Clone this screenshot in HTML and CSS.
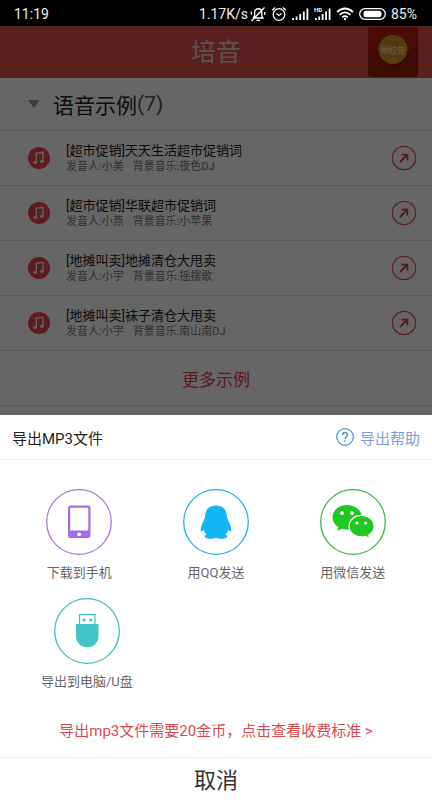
FILE: index.html
```html
<!DOCTYPE html>
<html lang="zh-CN">
<head>
<meta charset="utf-8">
<meta name="viewport" content="width=device-width, initial-scale=1">
<title>培音</title>
<link rel="stylesheet" href="styles.css">
</head>
<body>
<svg class="defs" aria-hidden="true">
  <symbol id="music" viewBox="0 0 22 22">
    <circle cx="11" cy="11" r="11" fill="#f04450"/>
    <path d="M8.300 15.500V6.300L14.900 5.300V14.500" fill="none" stroke="#eee" stroke-width="1.400"/>
    <ellipse cx="7.200" cy="15.500" rx="1.900" ry="1.400" fill="#eee"/>
    <ellipse cx="13.800" cy="14.500" rx="1.900" ry="1.400" fill="#eee"/>
  </symbol>
  <symbol id="arrow" viewBox="0 0 26 26">
    <circle cx="13" cy="13" r="11.600" fill="none" stroke="#d65464" stroke-width="1.300"/>
    <path d="M9 17L16 10M10.500 9.700H16.400V15.500" fill="none" stroke="#d8404f" stroke-width="1.800"/>
  </symbol>
</svg>

<div class="status">
  <span class="time">11:19</span>
  <div class="status-right">
    <span>1.17K/s</span>
    <svg class="bell" viewBox="0 0 16 16" fill="none" stroke="#fff" stroke-width="1.300"><path d="M3 12H13L11.800 10V6.500C11.800 1.500 4.600 1.500 4.600 6.500V10L3 12M6.500 14.300H10M1.500 15L14.500 1.500M1.300 5.500V8.500M14.700 6V9"/></svg>
    <svg class="alarm" viewBox="0 0 16 16" fill="none" stroke="#fff" stroke-width="1.300"><circle cx="8" cy="8.500" r="5.800"/><path d="M1.200 4.200L4.200 1.500M14.800 4.200L11.800 1.500M5.500 7.500L8 9.500L10.500 7.500"/></svg>
    <svg class="signal" viewBox="0 0 17 14" stroke="#fff" stroke-width="1.800"><path d="M1 13V11M4.600 13V9.500M8.200 13V7M11.800 13V4.500M15.400 13V1.500"/></svg>
    <svg class="signal" viewBox="0 0 17 14" stroke="#fff" stroke-width="1.800"><path d="M1.800 13V11M5.200 13V9.500M8.600 13V7M12 13V4.500M15.600 13V1.500"/><text x="0" y="5" class="hd-text">HD</text></svg>
    <svg class="wifi" viewBox="0 0 18 14" fill="none" stroke="#fff" stroke-width="1.700"><path d="M1 5Q9 -2 17 5M3.600 7.800Q9 2.800 14.400 7.800M6.200 10.400Q9 8 11.800 10.400"/><circle cx="9" cy="12" r="1.200" fill="#fff" stroke="none"/></svg>
    <svg class="battery" viewBox="0 0 27 12"><rect x=".7" y=".7" width="25.600" height="10.600" rx="5.300" fill="none" stroke="#fff" stroke-width="1.300"/><rect x="4.500" y="2.700" width="18" height="6.600" rx="2.500" fill="#fff"/></svg>
    <span>85%</span>
  </div>
</div>

<div class="page">
  <header class="bar">
    <h1>培音</h1>
    <button class="packet" aria-label="拆红包">
      <svg viewBox="0 0 50 50"><rect width="50" height="50" rx="3" fill="#9c1c08"/><path d="M0 3Q0 0 3 0H47Q50 0 50 3V19Q25 38 0 19Z" fill="#b9200e"/><path d="M0 19Q25 38 50 19" fill="none" stroke="#8a1200"/><circle cx="25" cy="24" r="15" fill="#8a1200"/><circle cx="25" cy="22.500" r="14.500" fill="#d8942c"/><text x="25" y="26" text-anchor="middle" class="packet-text">拆红包</text></svg>
    </button>
  </header>
  <main>
    <h2><span class="caret"></span>语音示例<span class="count">(7)</span></h2>
    <ul class="list">
      <li><svg class="music"><use href="#music"/></svg><div class="info"><h3>[超市促销]天天生活超市促销词</h3><p><span>发音人:小美</span><span>背景音乐:夜色DJ</span></p></div><button class="go" aria-label="打开"><svg><use href="#arrow"/></svg></button></li>
      <li><svg class="music"><use href="#music"/></svg><div class="info"><h3>[超市促销]华联超市促销词</h3><p><span>发音人:小燕</span><span>背景音乐:小苹果</span></p></div><button class="go" aria-label="打开"><svg><use href="#arrow"/></svg></button></li>
      <li><svg class="music"><use href="#music"/></svg><div class="info"><h3>[地摊叫卖]地摊清仓大甩卖</h3><p><span>发音人:小宇</span><span>背景音乐:摇摆歌</span></p></div><button class="go" aria-label="打开"><svg><use href="#arrow"/></svg></button></li>
      <li><svg class="music"><use href="#music"/></svg><div class="info"><h3>[地摊叫卖]袜子清仓大甩卖</h3><p><span>发音人:小宇</span><span>背景音乐:南山南DJ</span></p></div><button class="go" aria-label="打开"><svg><use href="#arrow"/></svg></button></li>
    </ul>
    <button class="more">更多示例</button>
  </main>
</div>
<div class="shade"></div>

<section class="sheet" role="dialog" aria-labelledby="sheet-title">
  <div class="sheet-head">
    <h2 id="sheet-title">导出MP3文件</h2>
    <a href="#help"><svg viewBox="0 0 18 18" fill="none" stroke="#4595d5" stroke-width="1.200"><circle cx="9" cy="9" r="8.300"/><path d="M6.500 7C6.500 3.600 11.500 3.700 11.500 6.800C11.500 8.700 9 8.800 9 11M9 12.300V13.800" stroke-width="1.500"/></svg>导出帮助</a>
  </div>
  <div class="options">
    <button>
      <svg viewBox="0 0 66 66"><circle cx="33" cy="33" r="32.300" fill="none" stroke="#a878d8" stroke-width="1.300"/><path fill-rule="evenodd" fill="#a56de2" d="M24 16.500H42Q44.500 16.500 44.500 19V46.500Q44.500 49 42 49H24Q22 49 22 46.500V19Q22 16.500 24 16.500ZM24.200 18.800V41.500H42.300V18.800Z"/><circle cx="33.200" cy="45.300" r="1.900" fill="#fff"/></svg>
      <span>下载到手机</span>
    </button>
    <button>
      <svg viewBox="0 0 66 66"><circle cx="33" cy="33" r="32.300" fill="none" stroke="#28b0dc" stroke-width="1.300"/><path fill="#12b7f5" d="M33 16.500C25.500 16.500 22 21.500 22 28C21.500 31.500 18 35.500 17.700 40.500C17.600 43.500 18.600 42.800 20.700 40.800C21.300 42.800 22.200 44.300 23.400 45.600C20.500 46.800 21.500 49.800 26 49.800C29.500 49.800 31.500 49.500 33 48.700C34.500 49.500 36.500 49.800 40 49.800C44.500 49.800 45.500 46.800 42.600 45.600C43.800 44.300 44.700 42.800 45.300 40.800C47.400 42.800 48.400 43.500 48.300 40.500C48 35.500 44.500 31.500 44 28C44 21.500 40.500 16.500 33 16.500Z"/></svg>
      <span>用QQ发送</span>
    </button>
    <button>
      <svg viewBox="0 0 66 66"><circle cx="33" cy="33" r="32.300" fill="none" stroke="#3eb649" stroke-width="1.300"/><path fill="#21c821" d="M27 16C19 16 12.500 21.500 12.500 28.500C12.500 32.500 14.800 36 18.500 38.300L17.300 42L22 39.700C34 43.500 42 36.500 42 28.500C42 21.500 35 16 27 16Z"/><path fill="#21c821" stroke="#fff" stroke-width="1.300" d="M41.500 26.300C34.500 26.300 29 31 29 37.300C29 44.500 36.500 49.500 45.500 47.300L50 49.800L48.800 46C52.300 43.700 54.200 40.800 54.200 37.300C54.200 31 48.500 26.300 41.500 26.300Z"/><g fill="#fff"><circle cx="22" cy="24" r="1.900"/><circle cx="32" cy="24" r="1.900"/><circle cx="37" cy="34" r="1.600"/><circle cx="45.500" cy="34" r="1.600"/></g></svg>
      <span>用微信发送</span>
    </button>
    <button>
      <svg viewBox="0 0 66 66"><circle cx="33" cy="33" r="32.300" fill="none" stroke="#42bcb8" stroke-width="1.300"/><path fill="#43c3c8" d="M22 26H44.500V38C44.500 53 22 53 22 38Z"/><path fill="none" stroke="#43c3c8" stroke-width="1.200" d="M25.500 26V16.700H41V26"/><circle cx="30" cy="22" r="1.600" fill="#43c3c8"/><circle cx="36.700" cy="22" r="1.600" fill="#43c3c8"/></svg>
      <span>导出到电脑/U盘</span>
    </button>
  </div>
  <a class="price" href="#price">导出mp3文件需要20金币，点击查看收费标准 &gt;</a>
  <button class="cancel">取消</button>
</section>
</body>
</html>
```
FILE: styles.css
```css
* { box-sizing: border-box; margin: 0; padding: 0; }
body {
  min-height: 100vh;
  background: #fff;
  font-family: Roboto, "Noto Sans CJK SC", sans-serif;
  color: #222;
}
h1, h2, h3 { font-weight: 400; }
button { font: inherit; color: inherit; background: none; border: 0; cursor: pointer; }
a { text-decoration: none; }
ul { list-style: none; }
svg { display: block; flex: none; }
.defs { display: none; }

.status {
  position: relative;
  z-index: 2;
  display: flex;
  align-items: center;
  justify-content: space-between;
  height: 26px;
  padding: 2px 15px 0 14px;
  background: #000;
  color: #eee;
  font-size: 14px;
  line-height: 20px;
}
.status-right { display: flex; align-items: center; gap: 5px; }
.bell { width: 16px; height: 16px; margin-left: -3px; }
.alarm { width: 16px; height: 16px; }
.signal { width: 17px; height: 14px; }
.hd-text { font-size: 6px; font-weight: 700; fill: #fff; stroke: none; }
.wifi { width: 18px; height: 14px; }
.battery { width: 27px; height: 12px; }

.bar {
  display: grid;
  grid-template-columns: 1fr auto 1fr;
  align-items: center;
  height: 52px;
  padding: 0 14px;
  background: #e15050;
}
.bar h1 { grid-column: 2; padding-top: 2px; font-size: 25px; line-height: 36px; color: #e6cccc; }
.packet { justify-self: end; width: 50px; height: 50px; }
.packet-text { font-size: 8px; font-weight: 700; fill: #f4dc98; }

main h2 {
  display: flex;
  align-items: center;
  height: 53px;
  padding: 0 28px;
  font-size: 21px;
  border-bottom: 1px solid #ddd;
}
.caret {
  margin-right: 13px;
  border: 6px solid transparent;
  border-top: 8px solid #999;
  border-bottom: 0;
}
.count { color: #555; }
.list li {
  display: flex;
  align-items: center;
  height: 55px;
  padding: 0 15px 0 28px;
  border-bottom: 1px solid #ddd;
}
.music { width: 22px; height: 22px; }
.info { flex: 1; padding-left: 16px; }
.info h3 { font-size: 13px; line-height: 17px; }
.info p { display: flex; gap: 9px; font-size: 11px; line-height: 16px; color: #777; }
.go, .go svg { width: 26px; height: 26px; }
.more {
  width: 100%;
  height: 55px;
  border-bottom: 1px solid #ddd;
  font-size: 17px;
  color: #dd4450;
}

.shade { position: fixed; inset: 0; background: rgba(0, 0, 0, .6); }

.sheet { position: fixed; right: 0; bottom: 0; left: 0; z-index: 3; background: #fff; }
.sheet-head {
  display: flex;
  align-items: center;
  justify-content: space-between;
  height: 45px;
  padding: 0 12px;
  border-bottom: 1px solid #eee;
}
.sheet-head h2 { font-size: 15px; }
.sheet-head a { display: flex; align-items: center; gap: 6px; font-size: 15px; color: #7c9fdb; }
.sheet-head a svg { width: 18px; height: 18px; }
.options { display: flex; flex-wrap: wrap; row-gap: 16px; padding: 29px 11px 0; }
.options button {
  display: flex;
  flex-direction: column;
  align-items: center;
  gap: 8px;
  min-width: 33.333%;
  padding: 0 30px;
  font-size: 13px;
  line-height: 19px;
  color: #666;
}
.options svg { width: 66px; height: 66px; }
.price {
  display: block;
  padding: 28px 12px 14px;
  font-size: 15px;
  line-height: 24px;
  text-align: center;
  color: #d94a50;
}
.cancel {
  display: block;
  width: 100%;
  height: 43px;
  padding-top: 3px;
  border-top: 1px solid #eee;
  font-size: 22px;
  line-height: 32px;
  color: #333;
}
```
